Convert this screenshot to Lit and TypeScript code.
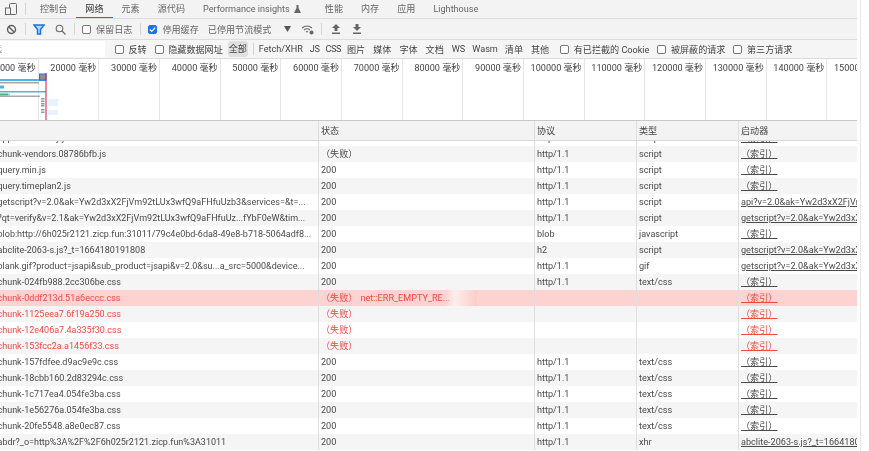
import { LitElement, html, css, svg } from "lit";
import { customElement } from "lit/decorators.js";

const IDX = "（索引）";
const GS = "getscript?v=2.0&ak=Yw2d3xX2FjVm92tLUx3wfQ9aFHfuUzb3";
const rows: [string, string, string, string, string, number][] = [
  ["chunk-vendors.08786bfb.js", "（失败）", "http/1.1", "script", IDX, 0],
  ["query.min.js", "200", "http/1.1", "script", IDX, 0],
  ["query.timeplan2.js", "200", "http/1.1", "script", IDX, 0],
  ["getscript?v=2.0&ak=Yw2d3xX2FjVm92tLUx3wfQ9aFHfuUzb3&services=&t=...", "200", "http/1.1", "script", "api?v=2.0&ak=Yw2d3xX2FjVm92tLUx3wfQ9aFHfuUzb3", 0],
  ["?qt=verify&v=2.1&ak=Yw2d3xX2FjVm92tLUx3wfQ9aFHfuUz...fYbF0eW&tim...", "200", "http/1.1", "script", GS, 0],
  ["blob:http://6h025r2121.zicp.fun:31011/79c4e0bd-6da8-49e8-b718-5064adf8...", "200", "blob", "javascript", IDX, 0],
  ["abclite-2063-s.js?_t=1664180191808", "200", "h2", "script", GS, 0],
  ["blank.gif?product=jsapi&sub_product=jsapi&v=2.0&su...a_src=5000&device...", "200", "http/1.1", "gif", GS, 0],
  ["chunk-024fb988.2cc306be.css", "200", "http/1.1", "text/css", IDX, 0],
  ["chunk-0ddf213d.51a6eccc.css", "（失败）", "", "", IDX, 2],
  ["chunk-1125eea7.6f19a250.css", "（失败）", "", "", IDX, 1],
  ["chunk-12e406a7.4a335f30.css", "（失败）", "", "", IDX, 1],
  ["chunk-153fcc2a.a1456f33.css", "（失败）", "", "", IDX, 1],
  ["chunk-157fdfee.d9ac9e9c.css", "200", "http/1.1", "text/css", IDX, 0],
  ["chunk-18cbb160.2d83294c.css", "200", "http/1.1", "text/css", IDX, 0],
  ["chunk-1c717ea4.054fe3ba.css", "200", "http/1.1", "text/css", IDX, 0],
  ["chunk-1e56276a.054fe3ba.css", "200", "http/1.1", "text/css", IDX, 0],
  ["chunk-20fe5548.a8e0ec87.css", "200", "http/1.1", "text/css", IDX, 0],
  ["abdr?_o=http%3A%2F%2F6h025r2121.zicp.fun%3A31011", "200", "http/1.1", "xhr", "abclite-2063-s.js?_t=1664180191808", 0],
];
const tabs = ["控制台", "网络", "元素", "源代码", "Performance insights", "性能", "内存", "应用", "Lighthouse"];
const types: [string, string][] = [
  ["Fetch/XHR", "mid"], ["JS", "caps"], ["CSS", "caps"], ["图片", ""], ["媒体", ""], ["字体", ""],
  ["文档", ""], ["WS", "mid"], ["Wasm", "mid"], ["清单", ""], ["其他", ""],
];
const ticks = Array.from({ length: 15 }, (_, i) => `${(i + 1) * 10000} 毫秒`);

@customElement("app-root")
export class AppRoot extends LitElement {
  static styles = css`
    :host {
      display: block;
      width: 869px;
      height: 451px;
      overflow: hidden;
      background: #fff;
      font-family: Roboto, "Noto Sans CJK SC", sans-serif;
      font-size: 9.1px;
      color: #4a4a4a;
      filter: blur(0.4px);
    }
    .wrap { display: flex; height: 451px; }
    .panel {
      width: 857px; height: 451px; overflow: hidden; flex: none;
      position: relative; display: flex; flex-direction: column; background: #fff;
    }
    .edge { width: 1px; margin-left: 3px; background: #e6e6e6; }
    .bar { display: flex; align-items: center; background: #f3f3f3; flex: none; white-space: nowrap; box-sizing: border-box; }
    .tabsbar { height: 19px; border-bottom: 1px solid #dcdcdc; color: #666; }
    .device { margin-left: 5px; width: 12px; height: 12px; }
    .vsep { width: 1px; height: 12px; background: #d4d4d4; flex: none; }
    .tabsbar .vsep { margin: 0 5px 0 8px; }
    .tab { padding: 0 9px; height: 18px; line-height: 18px; box-sizing: border-box; flex: none; }
    .tab.perf { display: flex; align-items: center; gap: 4px; padding-right: 15px; }
    .tab.on { color: #333; border-bottom: 1.5px solid #1a73e8; }
    .toolbar { height: 21px; border-bottom: 1px solid #dcdcdc; }
    .filter { height: 19px; border-bottom: 1px solid #dcdcdc; background: #f5f5f5; color: #444; }
    .ic { flex: none; display: block; }
    .cb {
      width: 7px; height: 7px; border: 1px solid #767676; border-radius: 2px;
      background: #fff; flex: none; display: block;
    }
    .cb.on { background: #1a73e8; border-color: #1a73e8; }
    .cb.on svg { display: block; width: 7px; height: 7px; }
    .lbl { margin-left: 5px; color: #666; }
    .filter .lbl { color: #444; margin-left: 4.5px; }
    .input {
      width: 105px; height: 16px; line-height: 16px; background: #fff; flex: none; margin-right: 10px;
      overflow: hidden; color: #999;
    }
    .input span { display: block; margin-left: -7px; }
    .gap8 { width: 8px; flex: none; }
    .all {
      width: 20px; height: 16px; line-height: 16px; text-align: center; background: #e0e0e0;
      border-radius: 3px; margin: 0 5px 0 5px; flex: none;
    }
    .filter .vsep { margin-right: 5px; }
    .ty { margin-right: 8px; flex: none; }
    .ty.mid { margin-right: 7px; }
    .ty.caps { margin-right: 6px; letter-spacing: -0.4px; }
    .timeline {
      height: 62px; flex: none; display: flex; position: relative; overflow: hidden; margin-left: -22px;
      border-bottom: 1px solid #c8c8c8; box-sizing: border-box; color: #444;
    }
    .tick {
      width: 60.68px; flex: none; box-sizing: border-box; height: 100%; border-right: 1px solid #e6e6e6;
      text-align: right; padding: 3px 2px 0 0; white-space: nowrap; line-height: 12px;
    }
    .chart { position: absolute; left: 0; top: 59px; width: 62px; height: 61px; pointer-events: none; }
    .head, .row {
      display: grid; grid-template-columns: 318px 216px 102px 102px 119px; flex: none;
    }
    .head { height: 20px; box-sizing: border-box; line-height: 20px; background: #f3f3f3; border-bottom: 1px solid #d8d8d8; color: #444; }
    .cell { border-left: 1px solid #dedede; padding-left: 2px; overflow: hidden; white-space: nowrap; }
    .cell.name { border-left: 0; padding-left: 0; font-size: 9px; }
    .cell.name > span { display: block; margin-left: -2.500px; }
    .row { height: 16px; line-height: 16px; background: #fff; color: #4a4a4a; }
    .row.alt { background: #f5f5f5; }
    .row.peek { height: 5px; line-height: 16px; }
    .row.peek .cell > span { display: block; margin-top: -11px; }
    .row.fail { color: #f04a42; }
    .row.sel { background: #fdd3d1; color: #ee4a42; }
    .link { text-decoration: underline; }
    .net { margin-left: 3px; }
    .smudge {
      position: absolute; left: 445px; top: 290px; width: 32px; height: 16px;
      background: linear-gradient(90deg, rgba(253,211,209,0) 0%, rgba(255,238,236,.95) 30%, rgba(250,205,200,.95) 100%);
    }
  `;

  private tabIcon() {
    return html`<svg class="ic" width="7" height="8" viewBox="0 0 7 8"><path d="M2.5 0h2v3l2.500 5h-7l2.500-5z" fill="#666"/></svg>`;
  }

  private box(on = false) {
    return on
      ? html`<span class="cb on"><svg viewBox="0 0 8 8"><path d="M1 4l2.200 2.200L7 2" stroke="#fff" stroke-width="1.400" fill="none"/></svg></span>`
      : html`<span class="cb"></span>`;
  }

  private chart() {
    const r = (x: number, y: number, w: number, h: number, c: string) =>
      svg`<rect x=${x} y=${y} width=${w} height=${h} fill=${c}/>`;
    return html`<svg class="chart" viewBox="0 0 62 61">
      ${r(0, 20, 39, 2, "#4db5e6")}${r(39, 21, 7, 1, "#4db5e6")}${r(0, 23, 39, 1.500, "#a8a8a8")}
      ${r(0, 26.500, 4, 3, "#4db5e6")}
      ${r(0, 32, 46, 1.500, "#4db5e6")}
      ${r(0, 34.500, 8, 2, "#4caf6a")}${r(8, 34.500, 2, 2, "#9fd3e8")}${r(0, 36.500, 40, 1.500, "#a8a8a8")}
      ${r(39, 14.500, 7.500, 7, "#2f6fe0")}${r(40, 15.500, 5.500, 5, "#8f8f8f")}
      ${r(41, 39, 3.500, 1.500, "#999")}${r(41, 41.500, 3.500, 1.500, "#999")}${r(41, 44, 3.500, 1.500, "#999")}
      ${r(41, 46, 3.500, 1.500, "#999")}${r(41, 50, 3.500, 1.500, "#999")}${r(41, 52.500, 3.500, 1.500, "#999")}
      ${r(48, 40, 10, 7, "#e6f2fc")}${r(48, 51, 10, 5, "#e6f2fc")}
      ${r(45.500, 14, 1, 47, "#c2204a")}
    </svg>`;
  }

  render() {
    return html`<div class="wrap">
      <div class="panel">
        <div class="bar tabsbar">
          <svg class="ic device" viewBox="0 0 12 12"><rect x="4.500" y="0.500" width="7" height="11" rx="1" fill="none" stroke="#666"/><rect x="0.500" y="5" width="5" height="6.500" fill="#f3f3f3" stroke="#666"/></svg>
          <span class="vsep"></span>
          ${tabs.map((t) =>
            t.startsWith("Perf")
              ? html`<span class="tab perf">${t}${this.tabIcon()}</span>`
              : html`<span class="tab ${t === "网络" ? "on" : ""}">${t}</span>`
          )}
        </div>
        <div class="bar toolbar">
          <svg class="ic" width="11" height="11" viewBox="0 0 11 11" style="margin-left:6px"><circle cx="5.500" cy="5.500" r="4" fill="none" stroke="#5f5f5f" stroke-width="1.400"/><path d="M2.700 2.700l5.600 5.600" stroke="#5f5f5f" stroke-width="1.400"/></svg>
          <span class="vsep" style="margin:0 7px 0 8px"></span>
          <svg class="ic" width="12" height="11" viewBox="0 0 12 11"><path d="M1 1h10L7.500 5.500V10h-3V5.500z" fill="#bcd6fa" stroke="#1a73e8" stroke-width="1.500"/></svg>
          <svg class="ic" width="11" height="11" viewBox="0 0 11 11" style="margin-left:10px"><circle cx="4.500" cy="4.500" r="3.300" fill="none" stroke="#6a6a6a" stroke-width="1.100"/><path d="M7 7l3.500 3.500" stroke="#6a6a6a" stroke-width="1.300"/></svg>
          <span class="vsep" style="margin:0 7px 0 8px"></span>
          ${this.box()}<span class="lbl">保留日志</span>
          <span class="vsep" style="margin:0 7px 0 8px"></span>
          ${this.box(true)}<span class="lbl">停用缓存</span>
          <span class="lbl" style="margin-left:9px;width:76px">已停用节流模式</span>
          <svg class="ic" width="7" height="6" viewBox="0 0 7 6"><path d="M0 0h7L3.500 6z" fill="#555"/></svg>
          <svg class="ic" width="13" height="11" viewBox="0 0 13 11" style="margin-left:10px"><path d="M1 4q5-4 10 0M3 6q3-2.500 6 0M5 8q1-1 2 0" fill="none" stroke="#666" stroke-width="1.100"/><circle cx="10.500" cy="8.500" r="2" fill="#666"/></svg>
          <span class="vsep" style="margin:0 10px 0 7px"></span>
          <svg class="ic" width="8" height="10" viewBox="0 0 8 10"><path d="M4 0l4 4H5.500v3h-3V4H0zM0 8.500h8V10H0z" fill="#666"/></svg>
          <svg class="ic" width="8" height="10" viewBox="0 0 8 10" style="margin-left:13px"><path d="M4 7L0 3h2.500V0h3v3H8zM0 8.500h8V10H0z" fill="#666"/></svg>
        </div>
        <div class="bar filter">
          <span class="input"><span>选</span></span>
          ${this.box()}<span class="lbl">反转</span>
          <span class="gap8"></span>
          ${this.box()}<span class="lbl">隐藏数据网址</span>
          <span class="all">全部</span>
          <span class="vsep"></span>
          ${types.map(([t, c]) => html`<span class="ty ${c}">${t}</span>`)}
          <span style="width:3px"></span>
          ${this.box()}<span class="lbl">有已拦截的 Cookie</span>
          <span class="gap8"></span>
          ${this.box()}<span class="lbl">被屏蔽的请求</span>
          <span class="gap8"></span>
          ${this.box()}<span class="lbl">第三方请求</span>
        </div>
        <div class="timeline">
          ${ticks.map((t) => html`<div class="tick">${t}</div>`)}
        </div>
        ${this.chart()}
        <div class="head">
          <div class="cell name"></div><div class="cell">状态</div><div class="cell">协议</div><div class="cell">类型</div><div class="cell">启动器</div>
        </div>
        <div class="row peek">
          <div class="cell name"><span>app.08786bfb.y.js</span></div><div class="cell"><span>200</span></div><div class="cell"><span>http/1.1</span></div><div class="cell"><span>script</span></div><div class="cell"><span class="link">${IDX}</span></div>
        </div>
        ${rows.map((r, i) => html`<div class="row ${i % 2 === 0 ? "alt" : ""} ${r[5] === 1 ? "fail" : ""} ${r[5] === 2 ? "sel" : ""}">
          <div class="cell name"><span>${r[0]}</span></div>
          <div class="cell">${r[1]}${r[5] === 2 ? html`<span class="net">net::ERR_EMPTY_RE...</span>` : ""}</div>
          <div class="cell">${r[2]}</div>
          <div class="cell">${r[3]}</div>
          <div class="cell"><span class="link">${r[4]}</span></div>
        </div>`)}
        <div class="smudge"></div>
      </div>
      <div class="edge"></div>
    </div>`;
  }
}
